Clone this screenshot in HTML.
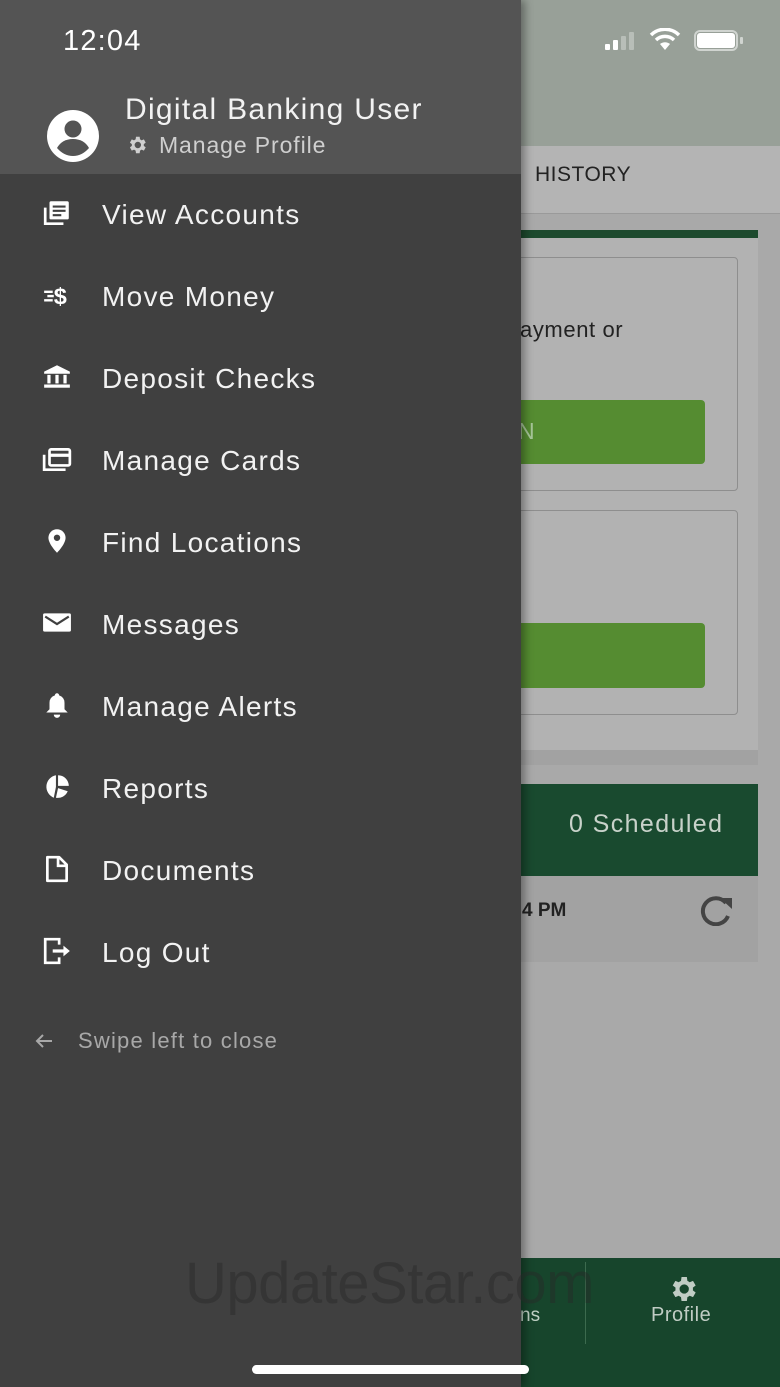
<!DOCTYPE html>
<html><head><meta charset="utf-8"><style>
*{margin:0;padding:0;box-sizing:border-box}
body{width:780px;height:1387px;overflow:hidden;position:relative;background:#a8a8a8;font-family:"Liberation Sans",sans-serif}
.abs{position:absolute}
.drawer{left:0;top:0;width:521px;height:1387px;background:#404040;box-shadow:4px 0 8px rgba(0,0,0,.35)}
.hdr{left:0;top:0;width:521px;height:174px;background:#545454}
.item{position:absolute;left:102px;font-size:28px;color:#f2f2f2;letter-spacing:1.3px;white-space:nowrap}
.ic{position:absolute;left:42px;width:30px;height:30px}
</style></head><body>
<div class="abs" style="left:521px;top:0;width:259px;height:146px;background:#98a098"></div>
<div class="abs" style="left:521px;top:146px;width:259px;height:68px;background:#b4b4b4;border-bottom:1px solid #9a9a9a"></div>
<div class="abs" style="left:535px;top:163px;font-size:21px;color:#222;letter-spacing:.5px">HISTORY</div>
<div class="abs" style="left:521px;top:214px;width:259px;height:1045px;background:#a9a9a9"></div>
<div class="abs" style="left:521px;top:230px;width:237px;height:535px;background:#b2b2b2"></div>
<div class="abs" style="left:521px;top:230px;width:237px;height:8px;background:#1d4a2e"></div>
<div class="abs" style="left:510px;top:257px;width:228px;height:234px;border:1.5px solid #8e8e8e;border-radius:4px;background:#b2b2b2"></div>
<div class="abs" style="left:520px;top:317px;font-size:22px;color:#222;letter-spacing:.6px">ayment or</div>
<div class="abs" style="left:510px;top:400px;width:195px;height:64px;background:#558c31;border-radius:4px"></div>
<div class="abs" style="left:518px;top:418px;font-size:23px;color:#a8c69a">N</div>
<div class="abs" style="left:510px;top:510px;width:228px;height:205px;border:1.5px solid #8e8e8e;border-radius:4px;background:#b2b2b2"></div>
<div class="abs" style="left:510px;top:623px;width:195px;height:65px;background:#558c31;border-radius:4px"></div>
<div class="abs" style="left:521px;top:750px;width:237px;height:15px;background:#a2a2a2"></div>
<div class="abs" style="left:521px;top:784px;width:237px;height:92px;background:#194a2f"></div>
<div class="abs" style="left:569px;top:810px;font-size:25px;color:#c8d2ca;letter-spacing:1.4px">0 Scheduled</div>
<div class="abs" style="left:521px;top:876px;width:237px;height:86px;background:#a2a2a2"></div>
<div class="abs" style="left:522px;top:900px;font-size:19px;color:#222;font-weight:bold">4 PM</div>
<svg class="abs" style="left:698px;top:894px" width="38" height="32" viewBox="0 0 38 32"><path d="M28 9A13 13 0 1 0 30 22" fill="none" stroke="#444" stroke-width="4"/><path d="M22 4L34 4L34 15Z" fill="#444"/></svg>
<div class="abs" style="left:521px;top:1258px;width:259px;height:129px;background:#17452c"></div>
<div class="abs" style="left:585px;top:1262px;width:1px;height:82px;background:#3c6a4e"></div>
<div class="abs" style="left:520px;top:1305px;font-size:19px;color:#bfd0c4">ns</div>
<svg class="abs" style="left:667px;top:1273px" width="32" height="32" viewBox="0 0 24 24"><path fill="#c0ccc4" d="M19.4 13a7.5 7.5 0 0 0 0-2l2.1-1.6-2-3.5-2.5 1a7.6 7.6 0 0 0-1.7-1L14.9 3h-4l-.4 2.9a7.6 7.6 0 0 0-1.7 1l-2.5-1-2 3.5L6.4 11a7.5 7.5 0 0 0 0 2l-2.1 1.6 2 3.5 2.5-1a7.6 7.6 0 0 0 1.7 1l.4 2.9h4l.4-2.9a7.6 7.6 0 0 0 1.7-1l2.5 1 2-3.5zM12.9 15.5a3.5 3.5 0 1 1 0-7 3.5 3.5 0 0 1 0 7z"/></svg>
<div class="abs" style="left:651px;top:1304px;font-size:20px;color:#c0ccc4;letter-spacing:.5px">Profile</div>
<div class="abs" style="left:605px;top:44px;width:5px;height:6px;background:#fff;border-radius:1px"></div>
<div class="abs" style="left:613px;top:40px;width:5px;height:10px;background:#fff;border-radius:1px"></div>
<div class="abs" style="left:621px;top:36px;width:5px;height:14px;background:#b8beb8;border-radius:1px"></div>
<div class="abs" style="left:629px;top:32px;width:5px;height:18px;background:#b8beb8;border-radius:1px"></div>
<svg class="abs" style="left:648px;top:28px" width="34" height="24" viewBox="0 0 34 24"><path d="M17 22L22 16A8 8 0 0 0 12 16Z" fill="#fff"/><path d="M8 12A13 13 0 0 1 26 12" stroke="#fff" stroke-width="3.5" fill="none"/><path d="M3 7A20 20 0 0 1 31 7" stroke="#fff" stroke-width="3.5" fill="none"/></svg>
<div class="abs" style="left:694px;top:30px;width:44px;height:21px;border:2px solid #d0d4d0;border-radius:6px"></div>
<div class="abs" style="left:697px;top:33px;width:38px;height:15px;background:#fff;border-radius:3px"></div>
<div class="abs" style="left:740px;top:37px;width:3px;height:7px;background:#d0d4d0;border-radius:1px"></div>
<div class="abs drawer"></div>
<div class="abs hdr"></div>
<div class="abs" style="left:63px;top:25px;font-size:29px;color:#fff;letter-spacing:1.2px">12:04</div>
<svg class="abs" style="left:46px;top:110px" width="54" height="52" viewBox="0 0 54 52"><circle cx="27" cy="26" r="26" fill="#fff"/><circle cx="27" cy="19" r="8.5" fill="#545454"/><path d="M11 38Q16 29 27 29Q38 29 43 38Q36 46 27 46Q18 46 11 38Z" fill="#545454"/></svg>
<div class="abs" style="left:125px;top:93px;font-size:30px;color:#f2f2f2;letter-spacing:1.3px;white-space:nowrap">Digital Banking User</div>
<svg class="abs" style="left:126px;top:134px" width="22" height="22" viewBox="0 0 24 24"><path fill="#cfcfcf" d="M19.4 13a7.5 7.5 0 0 0 0-2l2.1-1.6-2-3.5-2.5 1a7.6 7.6 0 0 0-1.7-1L14.9 3h-4l-.4 2.9a7.6 7.6 0 0 0-1.7 1l-2.5-1-2 3.5L6.4 11a7.5 7.5 0 0 0 0 2l-2.1 1.6 2 3.5 2.5-1a7.6 7.6 0 0 0 1.7 1l.4 2.9h4l.4-2.9a7.6 7.6 0 0 0 1.7-1l2.5 1 2-3.5zM12.9 15.5a3.5 3.5 0 1 1 0-7 3.5 3.5 0 0 1 0 7z"/></svg>
<div class="abs" style="left:159px;top:132px;font-size:23px;color:#cfcfcf;letter-spacing:.9px;white-space:nowrap">Manage Profile</div>

<svg class="ic" style="top:198px" viewBox="0 0 28 28"><path d="M3 9v15h17" fill="none" stroke="#fff" stroke-width="2.5"/><rect x="7" y="3" width="18" height="17" rx="1.5" fill="#fff"/><path d="M10 8h12M10 12h12M10 16h8" stroke="#404040" stroke-width="2"/></svg>
<div class="item" style="top:199px">View Accounts</div>
<svg class="ic" style="top:280px" viewBox="0 0 28 28"><path d="M2 11h8M5 15h6M2 19h8" stroke="#fff" stroke-width="2.2"/><text x="11" y="23" font-size="22" font-weight="bold" fill="#fff" font-family="Liberation Sans">$</text></svg>
<div class="item" style="top:281px">Move Money</div>
<svg class="ic" style="top:362px" viewBox="0 0 28 28"><path d="M14 3L2 9v2h24V9Z" fill="#fff"/><rect x="5" y="12" width="3" height="8" fill="#fff"/><rect x="12.5" y="12" width="3" height="8" fill="#fff"/><rect x="20" y="12" width="3" height="8" fill="#fff"/><rect x="2" y="21" width="24" height="3" fill="#fff"/></svg>
<div class="item" style="top:363px">Deposit Checks</div>
<svg class="ic" style="top:444px" viewBox="0 0 28 28"><path d="M2 10v14h20" fill="none" stroke="#fff" stroke-width="2.5"/><rect x="7" y="5" width="19" height="15" rx="1.5" fill="none" stroke="#fff" stroke-width="2.5"/><rect x="7" y="9" width="19" height="3" fill="#fff"/></svg>
<div class="item" style="top:445px">Manage Cards</div>
<svg class="ic" style="top:526px" viewBox="0 0 28 28"><path d="M14 3a8 8 0 0 0-8 8c0 6 8 14 8 14s8-8 8-14a8 8 0 0 0-8-8z" fill="#fff"/><circle cx="14" cy="11" r="3" fill="#404040"/></svg>
<div class="item" style="top:527px">Find Locations</div>
<svg class="ic" style="top:608px" viewBox="0 0 28 28"><rect x="1" y="5" width="26" height="17" rx="1.5" fill="#fff"/><path d="M3 8l11 7 11-7" fill="none" stroke="#404040" stroke-width="2"/></svg>
<div class="item" style="top:609px">Messages</div>
<svg class="ic" style="top:690px" viewBox="0 0 28 28"><path d="M14 3a2 2 0 0 0-2 2 7 7 0 0 0-5 7v6l-3 3h20l-3-3v-6a7 7 0 0 0-5-7 2 2 0 0 0-2-2z" fill="#fff"/><path d="M11 23a3 3 0 0 0 6 0z" fill="#fff"/></svg>
<div class="item" style="top:691px">Manage Alerts</div>
<svg class="ic" style="top:772px" viewBox="0 0 28 28"><path d="M13 3a11 11 0 0 0-2 21l2-10z" fill="#fff"/><path d="M15 3v10h10A10 10 0 0 0 15 3z" fill="#fff"/><path d="M15 15l-2 9a10 10 0 0 0 11-6z" fill="#fff"/></svg>
<div class="item" style="top:773px">Reports</div>
<svg class="ic" style="top:854px" viewBox="0 0 28 28"><path d="M5 3h11l7 7v15H5Z" fill="none" stroke="#fff" stroke-width="2.5" stroke-linejoin="round"/><path d="M15 3v8h8" fill="none" stroke="#fff" stroke-width="2.5"/></svg>
<div class="item" style="top:855px">Documents</div>
<svg class="ic" style="top:936px" viewBox="0 0 28 28"><path d="M16 8V3H3v22h13v-5" fill="none" stroke="#fff" stroke-width="2.5"/><path d="M10 14h12" stroke="#fff" stroke-width="3"/><path d="M20 9l6 5-6 5z" fill="#fff"/></svg>
<div class="item" style="top:937px">Log Out</div>

<svg class="abs" style="left:34px;top:1032px" width="20" height="18" viewBox="0 0 20 18"><path d="M18 9H3M9 3L3 9l6 6" fill="none" stroke="#a8a8a8" stroke-width="2"/></svg>
<div class="abs" style="left:78px;top:1028px;font-size:22px;color:#a8a8a8;letter-spacing:1.2px;white-space:nowrap">Swipe left to close</div>

<div class="abs" style="left:185px;top:1250px;font-size:58px;color:rgba(40,40,40,.45);font-family:'Liberation Sans',sans-serif;letter-spacing:-0.5px;white-space:nowrap">UpdateStar.com</div>
<div class="abs" style="left:252px;top:1365px;width:277px;height:9px;background:#fff;border-radius:5px"></div>
</body></html>
